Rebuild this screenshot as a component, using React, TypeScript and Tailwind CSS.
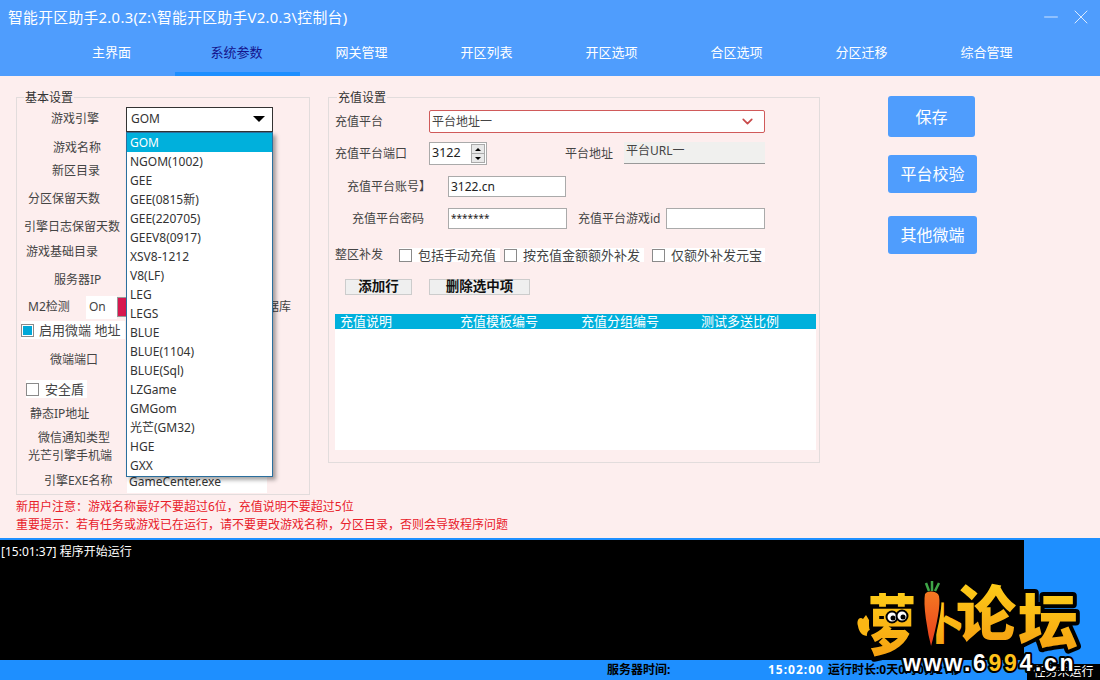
import { ChevronDown, Minus, X } from "lucide-react";

const tabs = ["主界面", "系统参数", "网关管理", "开区列表", "开区选项", "合区选项", "分区迁移", "综合管理"];

const engines = [
  "GOM",
  "NGOM(1002)",
  "GEE",
  "GEE(0815新)",
  "GEE(220705)",
  "GEEV8(0917)",
  "XSV8-1212",
  "V8(LF)",
  "LEG",
  "LEGS",
  "BLUE",
  "BLUE(1104)",
  "BLUE(Sql)",
  "LZGame",
  "GMGom",
  "光芒(GM32)",
  "HGE",
  "GXX",
];

const Check = ({ on }: { on?: boolean }) => (
  <span className="flex h-[13px] w-[13px] shrink-0 items-center justify-center border border-[#8a8a8a] bg-white">
    {on && <span className="h-[9px] w-[9px] bg-[#00a8d8]" />}
  </span>
);

const Row = ({ className, children }: { className: string; children: React.ReactNode }) => (
  <div className={`flex h-[18px] shrink-0 items-center text-[#444] ${className}`}>{children}</div>
);

const Logo = () => (
  <svg viewBox="0 0 250 110" className="absolute bottom-0 left-[850px] h-[110px] w-[250px]">
    <defs>
      <linearGradient id="gold" x1="0" y1="0" x2="0" y2="1">
        <stop offset="0" stopColor="#ffd81a" />
        <stop offset="1" stopColor="#f59a10" />
      </linearGradient>
      <linearGradient id="carrot" x1="0" y1="0" x2="0" y2="1">
        <stop offset="0" stopColor="#f47a22" />
        <stop offset="1" stopColor="#e8381c" />
      </linearGradient>
    </defs>
    {/* hand */}
    <path
      d="M8 56C6 50 10 46 13 49L16 45L19 50L24 50C28 56 26 66 18 66C12 66 9 62 8 56Z"
      fill="#fbb614"
      stroke="#000"
      strokeWidth="4"
      paintOrder="stroke"
    />
    <g
      fontFamily="'Noto Sans CJK SC', sans-serif"
      fontWeight="900"
      fill="url(#gold)"
      stroke="#000"
      strokeWidth="8"
      paintOrder="stroke"
      strokeLinejoin="round"
    >
      <text transform="translate(18,79) scale(1,1.35)" fontSize="48">萝</text>
      <text x="72" y="70" fontSize="44">卜</text>
      <text x="106" y="66" fontSize="60">论</text>
      <text x="168" y="74" fontSize="60">坛</text>
    </g>
    <path d="M74 24C72 34 76 62 81 80C86 62 92 36 90 26C88 19 76 19 74 24Z" fill="url(#carrot)" stroke="#000" strokeWidth="2" />
    <path d="M79 21L76 13M82 21L82 11M85 21L89 13" stroke="#3fa648" strokeWidth="2.5" fill="none" />
    <circle cx="42" cy="47" r="5.5" fill="#fff" stroke="#000" strokeWidth="2" />
    <circle cx="52" cy="46" r="5.5" fill="#fff" stroke="#000" strokeWidth="2" />
    <circle cx="43" cy="48" r="2.5" fill="#000" />
    <circle cx="53" cy="47" r="2.5" fill="#000" />
    <text
      x="53"
      y="101"
      fontFamily="'Liberation Sans', sans-serif"
      fontWeight="700"
      fontSize="23"
      fill="#fff"
      stroke="#000"
      strokeWidth="4"
      paintOrder="stroke"
      strokeLinejoin="round"
      letterSpacing="2.7"
    >
      www.6<tspan fill="#ffc21a">99</tspan>4.cn
    </text>
  </svg>
);

const App = () => {
  return (
    <div className="relative flex h-[680px] w-[1100px] flex-col overflow-hidden bg-[#fdeeee] font-['Noto_Sans','Noto_Sans_CJK_SC',sans-serif] text-[12px] leading-none text-[#333]">
      <header className="flex h-[76px] shrink-0 flex-col bg-[#4f9dfd] text-white">
        <div className="flex h-[34px] items-center justify-between pl-2 pr-[7px]">
          <span className="text-[14.8px] tracking-[0.3px]">智能开区助手2.0.3(Z:\智能开区助手V2.0.3\控制台)</span>
          <div className="flex items-center gap-[7px]">
            <Minus size={22} strokeWidth={0.8} />
            <X size={24} strokeWidth={0.8} />
          </div>
        </div>
        <nav className="flex h-[42px] pl-[50px]">
          {tabs.map((t, i) => (
            <div
              key={t}
              className={
                i === 1
                  ? "flex w-[125px] items-center justify-center border-b-4 border-[#1e8fff] pb-[2px] pr-[2px] text-[13px] text-[#14148c]"
                  : "flex w-[125px] items-center justify-center border-b-4 border-transparent pb-[2px] pr-[2px] text-[13px]"
              }
            >
              {t}
            </div>
          ))}
        </nav>
      </header>

      <main className="flex h-[462px] shrink-0 pl-[16px] pt-[21px]">
        {/* left column */}
        <div className="flex w-[294px] shrink-0 flex-col">
          <section className="relative flex h-[398px] flex-col border border-[#e2dcdc] pt-[12px]">
            <span className="absolute -top-[6px] left-[7px] bg-[#fdeeee] px-px">基本设置</span>
            <Row className="pl-[34px]">
              <span className="w-[75px]">游戏引擎</span>
              <div className="relative h-[25px] w-[147px] shrink-0">
                <div className="flex h-full items-center justify-between border border-[#333] bg-white pl-[4px] pr-[7px] text-[#333]">
                  <span>GOM</span>
                  <span className="h-0 w-0 border-x-[6px] border-t-[6px] border-x-transparent border-t-black" />
                </div>
                <ul className="absolute left-0 top-[25px] z-10 h-[345px] w-[147px] border border-[#2a6f9e] bg-white text-[#333] shadow-[3px_3px_4px_rgba(0,0,0,0.35)]">
                  {engines.map((e, i) => (
                    <li
                      key={e}
                      className={
                        i === 0
                          ? "flex h-[19px] items-center bg-[#00b0dc] pl-[3px] pt-[2px] text-white"
                          : "flex h-[19px] items-center pl-[3px] pt-[2px]"
                      }
                    >
                      {e}
                    </li>
                  ))}
                </ul>
              </div>
            </Row>
            <Row className="mt-[11px] pl-[36px]">游戏名称</Row>
            <Row className="mt-[5px] pl-[35px]">新区目录</Row>
            <Row className="mt-[10px] pl-[11px]">分区保留天数</Row>
            <Row className="mt-[10px] pl-[7px]">引擎日志保留天数</Row>
            <Row className="mt-[7px] pl-[9px]">游戏基础目录</Row>
            <Row className="mt-[10px] pl-[37px]">服务器IP</Row>
            <Row className="mt-[9px] pl-[11px]">
              <span className="w-[58px]">M2检测</span>
              <span className="flex h-[23px] w-[31px] items-center bg-white pl-[3px]">On</span>
              <span className="h-[20px] w-[10px] border border-[#999] bg-[#d6184f]" />
              <span className="ml-[140px]">据库</span>
            </Row>
            <Row className="mt-[5px] pl-[4px]">
              <span className="flex h-[18px] w-[104px] items-center gap-[5px] bg-white text-[13px]">
                <Check on />
                <span>启用微端&nbsp;地址</span>
              </span>
            </Row>
            <Row className="mt-[12px] pl-[33px]">微端端口</Row>
            <Row className="mt-[11px] pl-[9px]">
              <span className="flex h-[18px] items-center gap-[6px] bg-white pr-[3px] text-[13px]">
                <Check />
                <span>安全盾</span>
              </span>
            </Row>
            <Row className="mt-[7px] pl-[13px]">静态IP地址</Row>
            <Row className="mt-[6px] pl-[21px]">微信通知类型</Row>
            <Row className="pl-[11px]">光芒引擎手机端</Row>
            <Row className="mt-[7px] pl-[27px]">
              <span className="w-[83px]">引擎EXE名称</span>
              <span className="-mb-[2px] flex h-[22px] w-[140px] items-end bg-white pb-[5px] pl-[2px] text-[#333]">GameCenter.exe</span>
            </Row>
          </section>
          <p className="mt-[3px] flex h-[18px] items-center whitespace-nowrap text-[#e8202a]">新用户注意：游戏名称最好不要超过6位，充值说明不要超过5位</p>
          <p className="flex h-[18px] items-center whitespace-nowrap text-[#e8202a]">重要提示：若有任务或游戏已在运行，请不要更改游戏名称，分区目录，否则会导致程序问题</p>
        </div>

        {/* right group */}
        <section className="relative ml-[18px] flex h-[366px] w-[492px] shrink-0 flex-col border border-[#e2dcdc] pl-[6px] pt-[12px] text-[#444]">
          <span className="absolute -top-[6px] left-[8px] bg-[#fdeeee] px-px text-[#333]">充值设置</span>
          <div className="flex h-[23px] items-center">
            <span className="w-[94px] pt-px">充值平台</span>
            <div className="flex h-[23px] w-[336px] items-center justify-between rounded-[2px] border border-[#d05a5a] bg-white pl-[2px] pr-[8px]">
              <span>平台地址一</span>
              <ChevronDown size={17} strokeWidth={2.4} className="text-[#c84a4a]" />
            </div>
          </div>
          <div className="mt-[9px] flex h-[23px] items-center">
            <span className="w-[94px] pt-px">充值平台端口</span>
            <div className="flex h-[23px] w-[58px] items-center justify-between border border-[#aaa] bg-white pl-[2px] pr-[1px] text-[#222]">
              <span className="text-[12.5px]">3122</span>
              <span className="flex h-[19px] w-[14px] flex-col border border-[#aaa] bg-[#e8e8e8]">
                <span className="flex flex-1 items-center justify-center border-b border-[#aaa]">
                  <span className="h-0 w-0 border-x-[3px] border-b-[3px] border-x-transparent border-b-black" />
                </span>
                <span className="flex flex-1 items-center justify-center">
                  <span className="h-0 w-0 border-x-[3px] border-t-[3px] border-x-transparent border-t-black" />
                </span>
              </span>
            </div>
            <span className="ml-[78px] w-[59px] pt-px">平台地址</span>
            <span className="-mt-[2px] flex h-[22px] w-[141px] items-center border-b border-[#999] bg-[#f0f0ee] pb-[2px] pl-[2px]">平台URL一</span>
          </div>
          <div className="mt-[11px] flex h-[21px] items-center">
            <span className="w-[113px] pl-[12px]">充值平台账号】</span>
            <span className="flex h-[21px] w-[118px] items-center border border-[#aaa] bg-white pl-[2px] text-[#222]">3122.cn</span>
          </div>
          <div className="mt-[11px] flex h-[21px] items-center">
            <span className="w-[113px] pl-[17px]">充值平台密码</span>
            <span className="flex h-[21px] w-[119px] items-center border border-[#aaa] bg-white pb-[2px] pl-[2px] text-[10px] text-[#222]">*******</span>
            <span className="ml-[11px] w-[88px]">充值平台游戏id</span>
            <span className="h-[21px] w-[99px] border border-[#aaa] bg-white" />
          </div>
          <div className="mt-[18px] flex h-[16px] items-center">
            <span className="w-[64px]">整区补发</span>
            <span className="flex h-[14px] w-[101px] items-center gap-[6px] bg-white text-[13px]">
              <Check />
              包括手动充值
            </span>
            <span className="ml-[4px] flex h-[14px] w-[140px] items-center gap-[6px] bg-white text-[13px]">
              <Check />
              按充值金额额外补发
            </span>
            <span className="ml-[8px] flex h-[14px] w-[113px] items-center gap-[6px] bg-white text-[13px]">
              <Check />
              仅额外补发元宝
            </span>
          </div>
          <div className="mt-[16px] flex h-[16px] items-center pl-[10px] text-[13.5px] font-bold text-[#111]">
            <span className="flex h-[16px] w-[67px] items-center justify-center border border-[#ccc] bg-[#efefef]">添加行</span>
            <span className="ml-[17px] flex h-[16px] w-[101px] items-center justify-center border border-[#ccc] bg-[#efefef]">删除选中项</span>
          </div>
          <div className="mt-[19px] flex h-[136px] w-[481px] flex-col bg-white">
            <div className="grid h-[15px] grid-cols-[120px_121px_120px_120px] items-center bg-[#00b0dc] pl-[5px] text-[13px] text-white">
              <span>充值说明</span>
              <span>充值模板编号</span>
              <span>充值分组编号</span>
              <span>测试多送比例</span>
            </div>
          </div>
        </section>

        {/* side buttons */}
        <div className="ml-[68px] flex w-[89px] shrink-0 flex-col items-start text-[16px] text-white">
          <button className="-mt-px flex h-[41px] w-[87px] items-center justify-center rounded-[3px] bg-[#4f9dfd]">保存</button>
          <button className="mt-[18px] flex h-[38px] w-[89px] items-center justify-center rounded-[3px] bg-[#4f9dfd]">平台校验</button>
          <button className="mt-[23px] flex h-[38px] w-[89px] items-center justify-center rounded-[3px] bg-[#4f9dfd]">其他微端</button>
        </div>
      </main>

      <div className="flex h-[122px] shrink-0 border-t-2 border-[#1e8fff] bg-[#1e8fff]">
        <div className="h-[120px] w-[1024px] bg-black pl-px pt-[6px] text-white">[15:01:37] 程序开始运行</div>
      </div>

      <footer className="flex h-[20px] shrink-0 items-center bg-[#1e8fff] font-bold">
        <span className="ml-[607px] w-[161px] text-black">服务器时间:</span>
        <span className="w-[60px] tracking-[1px] text-white">15:02:00</span>
        <span className="w-[199px] whitespace-nowrap text-black">运行时长:0天0时0分21秒</span>
        <span className="mt-[4px] flex h-[16px] w-[73px] items-center justify-center bg-black font-normal text-white">任务未运行</span>
      </footer>

      <Logo />
    </div>
  );
};

export default App;
